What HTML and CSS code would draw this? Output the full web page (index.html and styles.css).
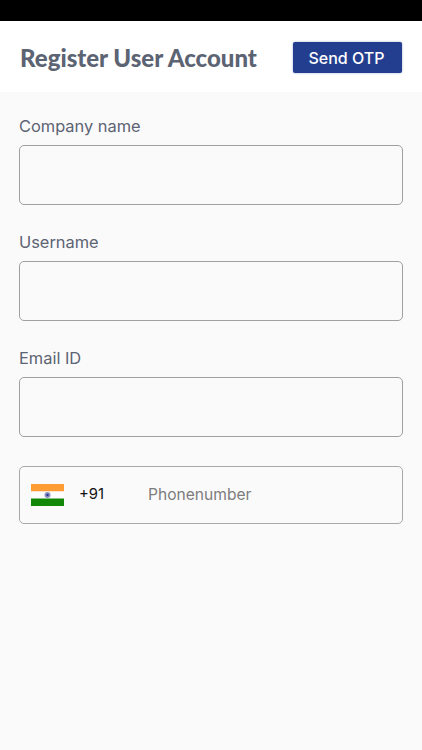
FILE: index.html
```html
<!DOCTYPE html>
<html lang="en">
<head>
    <meta charset="UTF-8">
    <meta name="viewport" content="width=device-width, initial-scale=1.0">
    <title>Register User Account</title>
    <link rel="stylesheet" href="styles.css">
</head>
<body>
    <div class="status-bar"></div>

    <header class="top-bar">
        <h1>Register User Account</h1>
        <button class="otp-button">Send OTP</button>
    </header>

    <main class="form">
        <div class="field">
            <label for="company">Company name</label>
            <input type="text" id="company">
        </div>
        <div class="field">
            <label for="username">Username</label>
            <input type="text" id="username">
        </div>
        <div class="field">
            <label for="email">Email ID</label>
            <input type="text" id="email">
        </div>

        <div class="phone-box">
            <svg class="flag" width="33" height="22" viewBox="0 0 33 22">
                <rect width="33" height="7.5" fill="#ff9c33"/>
                <rect y="7.5" width="33" height="7" fill="#fdfdfd"/>
                <rect y="14.5" width="33" height="7.5" fill="#138808"/>
                <circle cx="16.5" cy="11" r="3" fill="#8f93c4"/>
                <circle cx="16.5" cy="11" r="1.2" fill="#2e3590"/>
            </svg>
            <span class="dial-code">+91</span>
            <input type="text" class="phone-input" placeholder="Phonenumber">
        </div>
    </main>
</body>
</html>
```

FILE: styles.css
```css
* {
    box-sizing: border-box;
}

html, body {
    height: 100%;
}

body {
    margin: 0;
    display: flex;
    flex-direction: column;
    font-family: Inter, 'Noto Sans', sans-serif;
    background: #fafafa;
    overflow: hidden;
}

.status-bar {
    height: 21px;
    background: #000;
}

.top-bar {
    height: 71px;
    display: flex;
    align-items: center;
    justify-content: space-between;
    padding: 2px 20px 0 20px;
    background: #fff;
}

.top-bar h1 {
    margin: 0;
    font-family: Lato, Inter, sans-serif;
    font-size: 24px;
    font-weight: 900;
    color: #5c6373;
}

.otp-button {
    width: 109px;
    height: 31px;
    padding: 0 2px 0 0;
    border: none;
    border-radius: 2px;
    background: #233e8e;
    color: #fff;
    font-family: inherit;
    font-size: 16px;
    font-weight: 450;
    box-shadow: 0 0 2px rgba(35, 62, 142, 0.5);
}

.form {
    flex: 1;
    padding: 24px 19px 0;
}

.field {
    margin-bottom: 27px;
}

.field label {
    display: block;
    margin-bottom: 9px;
    font-size: 16.4px;
    line-height: 20px;
    color: #5c6373;
}

.field input {
    display: block;
    width: 100%;
    height: 60px;
    border: 1px solid #a0a0a0;
    border-radius: 5px;
    background: #fafafa;
}

.phone-box {
    display: flex;
    align-items: center;
    height: 58px;
    margin-top: 29px;
    padding-left: 11px;
    border: 1px solid #a8a8a8;
    border-radius: 5px;
}

.dial-code {
    width: 68px;
    margin: 0 0 2px 15px;
    font-size: 14.8px;
    color: #111;
}

.phone-input {
    flex: 1;
    min-width: 0;
    padding: 0;
    margin: 0 0 2px 1px;
    border: none;
    outline: none;
    background: transparent;
    font-family: inherit;
    font-size: 15.6px;
}

.phone-input::placeholder {
    color: #7d7d7d;
    opacity: 1;
}
```
